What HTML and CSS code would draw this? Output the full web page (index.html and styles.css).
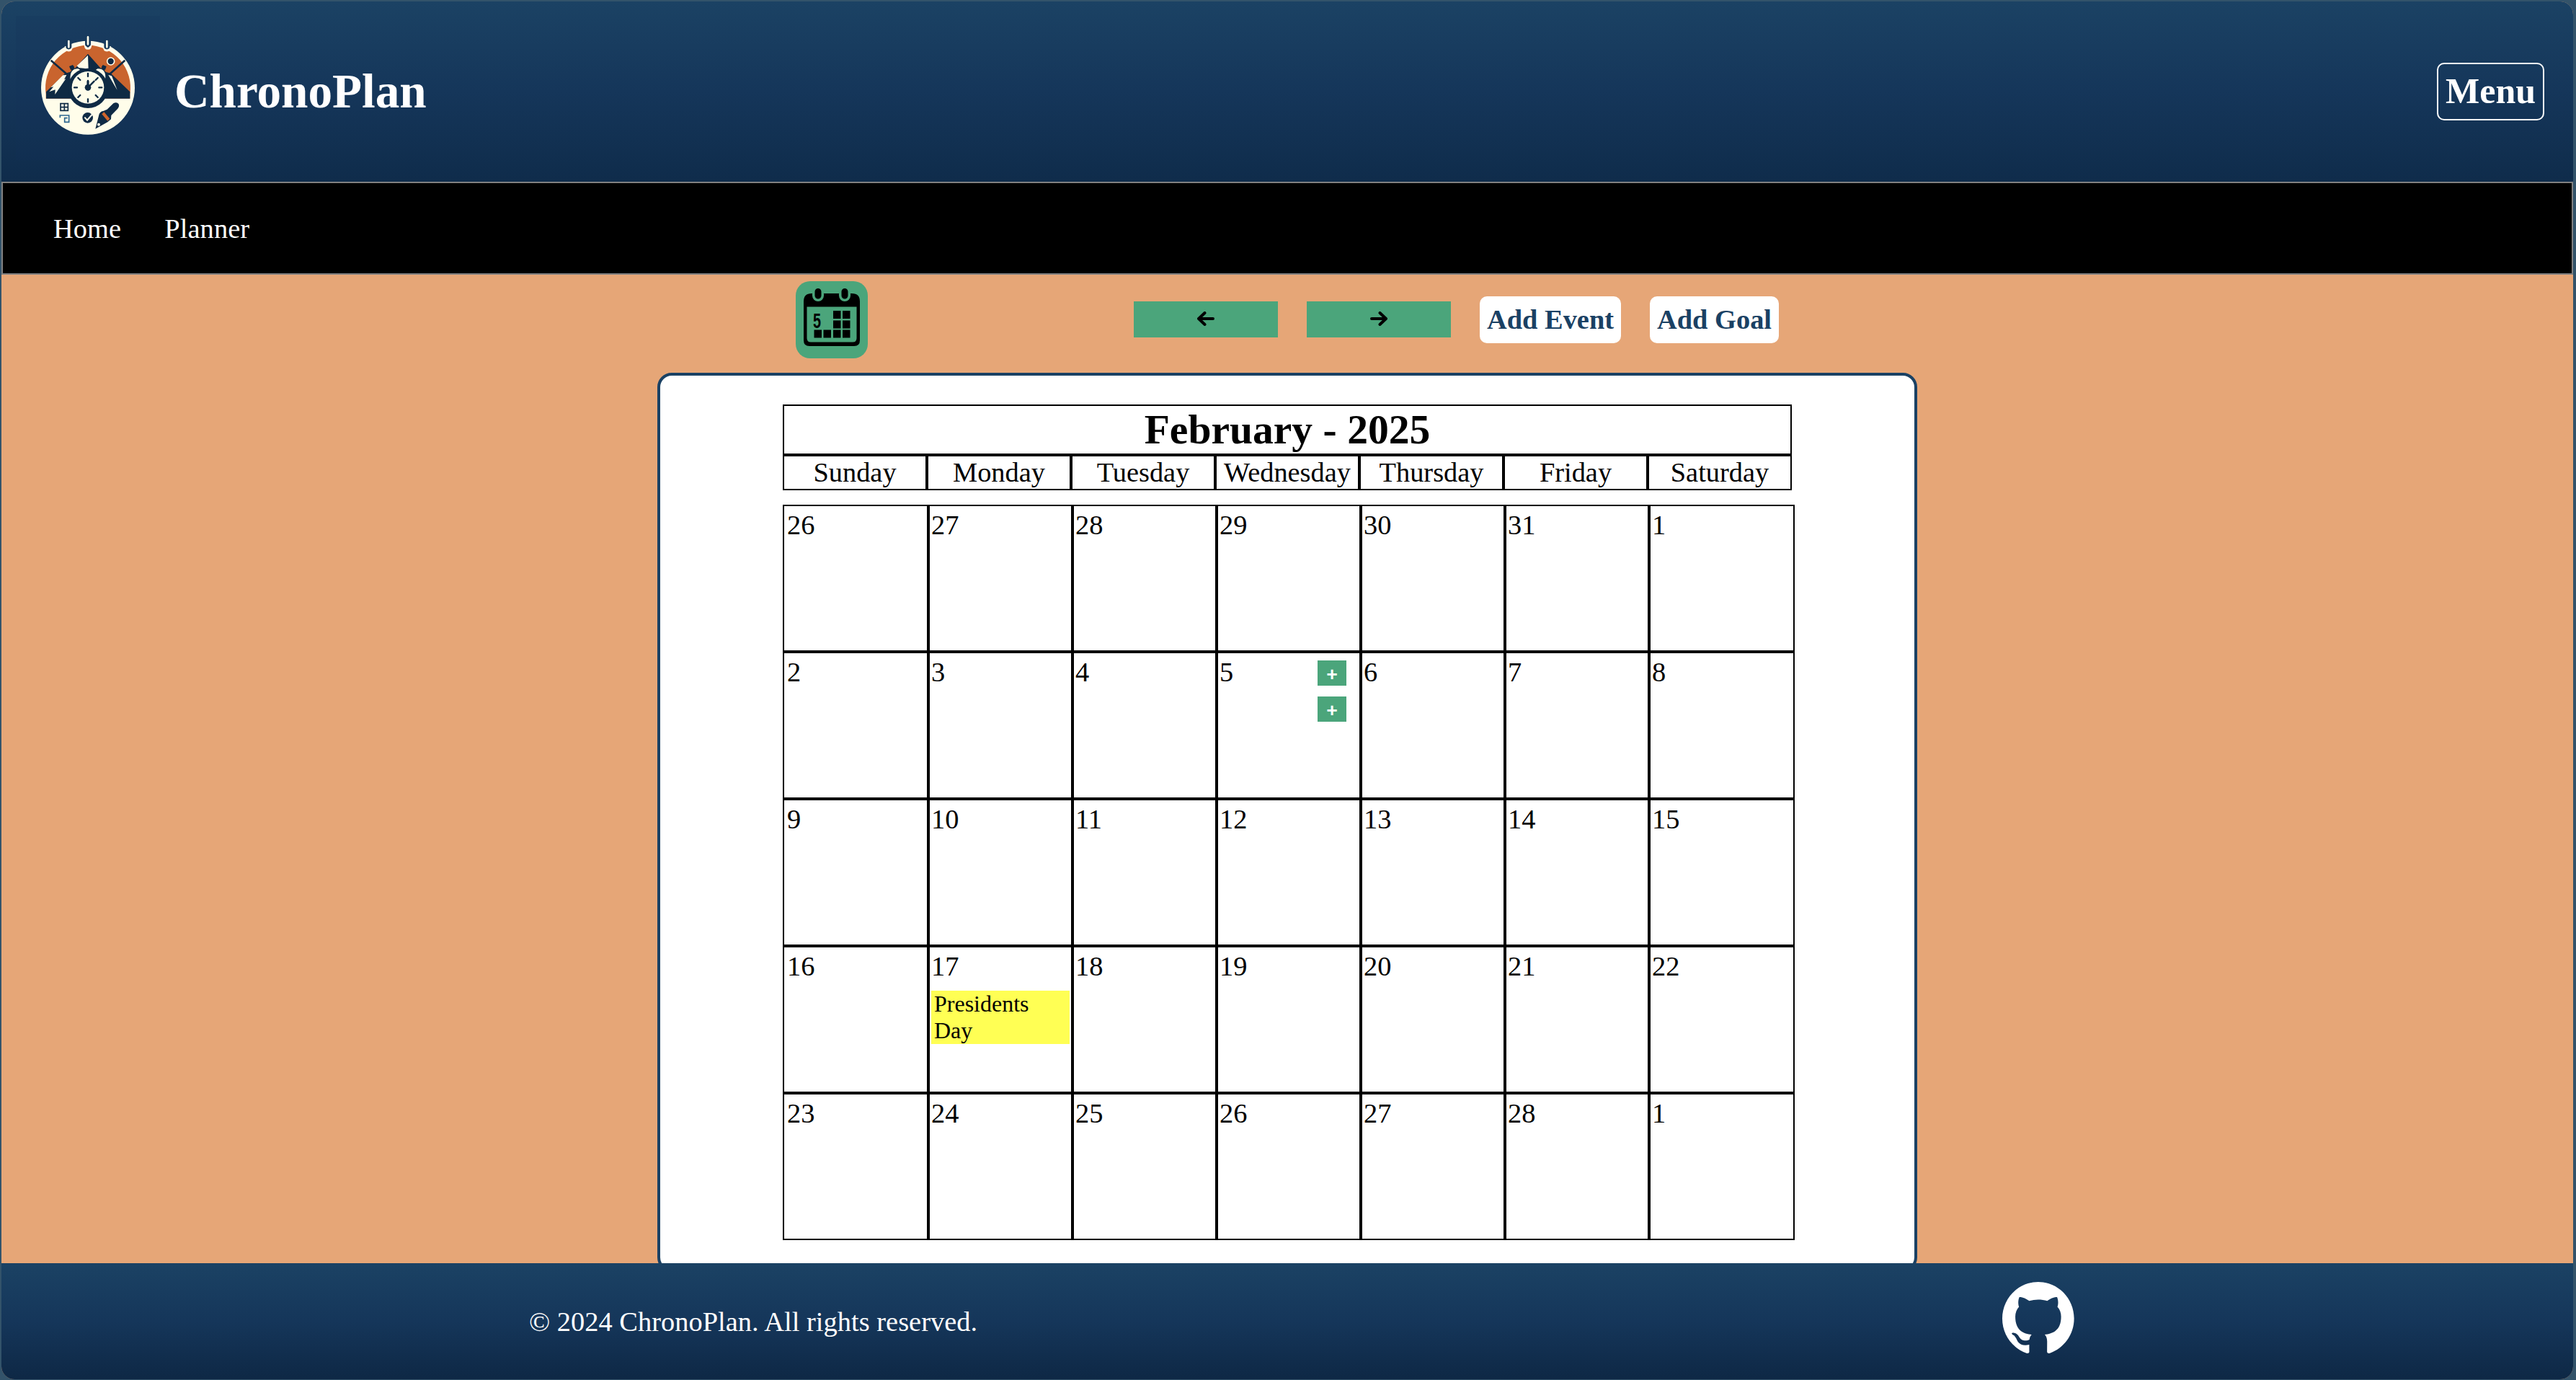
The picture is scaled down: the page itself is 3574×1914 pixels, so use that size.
FILE: index.html
```html
<!DOCTYPE html>
<html lang="en">
<head>
<meta charset="utf-8">
<title>ChronoPlan</title>
<link rel="stylesheet" href="styles.css">
</head>
<body>
<div class="window">
  <header class="header">
    <div class="brand">
      <div class="logo">
        <svg viewBox="0 0 480 480" width="160" height="160" aria-hidden="true">
          <circle cx="246" cy="245" r="195" fill="#fffdea"/>
          <path d="M71 272A177 177 0 1 1 421 272L421 290L71 290Z" fill="#c9642e"/>
          <path d="M154 72Q154 90 166 90Q178 90 178 72M234 62Q234 82 246 82Q258 82 258 62M313 72Q313 90 325 90Q337 90 337 72" fill="#173a5c" stroke="#fffdea" stroke-width="9"/>
          <path d="M154 44h24v30q0 10-12 10t-12-10zM234 28h24v36q0 10-12 10t-12-10zM313 44h24v30q0 10-12 10t-12-10z" fill="#173a5c"/>
          <path d="M166 51V76M246 34V64M325 51V76" stroke="#fffdea" stroke-width="8" stroke-linecap="round"/>
          <path d="M72 290V262L150 186L182 176L246 104L310 176L342 186L421 262V290Z" fill="#0f2a44"/>
          <path d="M92 131L175 203M400 131L320 203" stroke="#0f2a44" stroke-width="8"/>
          <path d="M246 110L248 168Q225 162 209 163L200 154Z" fill="#fffdea"/>
          <path d="M157 192L147 211L154 208L109 273L110 253L85 262L103 241L91 244L142 193ZM331 192L345 196L368 255Z" fill="#fffdea"/>
          <circle cx="341" cy="135" r="15" fill="#0f2a44" stroke="#fffdea" stroke-width="5"/>
          <path d="M168 156L183 150L190 160L185 172L174 170ZM323 156L308 150L302 160L307 172L318 170Z" fill="#0f2a44"/>
          <path d="M171 211Q167 162 207 164L228 178Q193 184 178 211ZM320 211Q326 162 285 164L264 178Q299 184 314 211Z" fill="#fffdea" stroke="#0f2a44" stroke-width="4"/>
          <circle cx="246" cy="247" r="83" fill="#0f2a44"/>
          <circle cx="246" cy="244" r="67" fill="#fffdea"/>
          <path d="M246 186v12M246 292v12M189 244h12M292 244h12M205 204l9 9M278 276l9 9M287 204l-9 9M214 276l-9 9M246 244V216M246 244L272 218" stroke="#0f2a44" stroke-width="7" stroke-linecap="round"/>
          <path d="M246 252V218" stroke="#0f2a44" stroke-width="9" stroke-linecap="round"/>
          <circle cx="246" cy="244" r="13" fill="#0f2a44"/>
          <path d="M132 311h31v29h-31zM148 311v29M132 326h31" fill="none" stroke="#0f2a44" stroke-width="5"/>
          <path d="M130 370V360H167V388H149V371H161" fill="none" stroke="#2c6690" stroke-width="5"/>
          <circle cx="245" cy="370" r="22" fill="#0f2a44"/>
          <path d="M232 368L243 380L268 351" fill="none" stroke="#fffdea" stroke-width="6"/>
          <path d="M277 416L293 354Q300 342 310 342L326 335L352 310Q366 302 374 313Q378 323 370 332L343 360L342 376L328 388Z" fill="#0f2a44"/>
          <path d="M304 355L313 346L337 374L328 383Z" fill="#d0652c"/>
          <circle cx="291" cy="398" r="6" fill="#fffdea"/>
        </svg>
      </div>
      <h1 class="name">ChronoPlan</h1>
    </div>
    <button class="menu" type="button">Menu</button>
  </header>
  <nav class="nav">
    <a class="link">Home</a>
    <a class="link">Planner</a>
  </nav>
  <main class="main">
    <div class="toolbar">
      <div class="calendar-icon">
        <svg viewBox="0 0 100 107" width="100" height="107" aria-hidden="true">
          <path d="M11 38V28Q11 17 22 17H78Q89 17 89 28V38V82Q89 90 81 90H19Q11 90 11 82ZM15.500 35.500V79Q15.500 84.500 21 84.500H79Q84.500 84.500 84.500 79V35.500Z" fill="#000" fill-rule="evenodd"/>
          <path d="M31 18V20M68 18V20" stroke="#4ba57b" stroke-width="16" stroke-linecap="round"/>
          <path d="M31 14.500V20M68 14.500V20" stroke="#000" stroke-width="9" stroke-linecap="round"/>
          <path d="M52 41h10.500v11H52zM65 41h10.500v11H65zM52 54.500h10.500v11H52zM65 54.500h10.500v11H65zM25.500 67.500H36v11H25.500zM38.500 67.500H49v11H38.500zM52 67.500h10.500v11H52zM65 67.500h10.500v11H65z" fill="#000"/>
          <text class="icon-day" x="24" y="65" textLength="11" lengthAdjust="spacingAndGlyphs">5</text>
        </svg>
      </div>
      <div class="actions">
        <button class="arrow" type="button" aria-label="Previous month"><svg viewBox="0 0 24 20" width="24" height="20"><path d="M2 10H22M10.500 2L2 10L10.500 18"/></svg></button>
        <button class="arrow" type="button" aria-label="Next month"><svg viewBox="0 0 24 20" width="24" height="20"><path d="M22 10H2M13.500 2L22 10L13.500 18"/></svg></button>
        <button class="add" type="button">Add Event</button>
        <button class="add" type="button">Add Goal</button>
      </div>
    </div>
    <section class="card">
      <h2 class="month">February - 2025</h2>
      <div class="weekdays">
        <div>Sunday</div><div>Monday</div><div>Tuesday</div><div>Wednesday</div><div>Thursday</div><div>Friday</div><div>Saturday</div>
      </div>
      <div class="days">
        <div class="day first">26</div><div class="day">27</div><div class="day">28</div><div class="day">29</div><div class="day">30</div><div class="day">31</div><div class="day">1</div>
        <div class="day first">2</div><div class="day">3</div><div class="day">4</div>
        <div class="day today"><span>5</span><div class="plus-list"><button class="plus" type="button">+</button><button class="plus" type="button">+</button></div></div>
        <div class="day">6</div><div class="day">7</div><div class="day">8</div>
        <div class="day first">9</div><div class="day">10</div><div class="day">11</div><div class="day">12</div><div class="day">13</div><div class="day">14</div><div class="day">15</div>
        <div class="day first">16</div><div class="day">17<div class="event">Presidents<br>Day</div></div><div class="day">18</div><div class="day">19</div><div class="day">20</div><div class="day">21</div><div class="day">22</div>
        <div class="day first">23</div><div class="day">24</div><div class="day">25</div><div class="day">26</div><div class="day">27</div><div class="day">28</div><div class="day">1</div>
      </div>
    </section>
  </main>
  <footer class="footer">
    <p class="copyright">© 2024 ChronoPlan. All rights reserved.</p>
    <svg class="github" viewBox="0 0 98 96" preserveAspectRatio="none" aria-label="GitHub"><path fill="#fff" fill-rule="evenodd" clip-rule="evenodd" d="M48.854 0C21.839 0 0 22 0 49.217c0 21.756 13.993 40.172 33.405 46.690 2.427.490 3.316-1.059 3.316-2.362 0-1.141-.080-5.052-.080-9.127-13.590 2.934-16.420-5.867-16.420-5.867-2.184-5.704-5.420-7.170-5.420-7.170-4.448-3.015.324-3.015.324-3.015 4.934.326 7.523 5.052 7.523 5.052 4.367 7.496 11.404 5.378 14.235 4.074.404-3.178 1.699-5.378 3.074-6.600-10.839-1.141-22.243-5.378-22.243-24.283 0-5.378 1.940-9.778 5.014-13.200-.485-1.222-2.184-6.275.486-13.038 0 0 4.125-1.304 13.426 5.052a46.970 46.970 0 0 1 12.214-1.630c4.125 0 8.330.571 12.213 1.630 9.302-6.356 13.427-5.052 13.427-5.052 2.670 6.763.970 11.816.485 13.038 3.155 3.422 5.015 7.822 5.015 13.200 0 18.905-11.404 23.060-22.324 24.283 1.780 1.548 3.316 4.481 3.316 9.126 0 6.600-.080 11.897-.080 13.526 0 1.304.890 2.853 3.316 2.364 19.412-6.520 33.405-24.935 33.405-46.691C97.707 22 75.788 0 48.854 0z"/></svg>
  </footer>
</div>
</body>
</html>
```
FILE: styles.css
```css
* {
  box-sizing: border-box;
}

body {
  margin: 0;
  height: 1914px;
  padding: 2px 4px 1px 2px;
  overflow: hidden;
  background: #33536a;
  font-family: "Liberation Serif", "Times New Roman", serif;
  font-size: 38.4px;
  color: #000;
}

button {
  margin: 0;
  border: 0;
  font-family: inherit;
}

h1, h2, p {
  margin: 0;
}

.window {
  display: flex;
  flex-direction: column;
  width: 3568px;
  height: 1911px;
  overflow: hidden;
  border-radius: 18px;
  background: #e6a677;
}

.header {
  display: flex;
  align-items: center;
  justify-content: space-between;
  flex: none;
  height: 250px;
  padding: 0 40px 0 20px;
  background: linear-gradient(#1b4264, #15365a 50%, #0f2c4b);
  color: #fff;
}

.brand {
  display: flex;
  align-items: center;
  gap: 20px;
  height: 250px;
}

.logo {
  align-self: flex-start;
  width: 200px;
  height: 200px;
  padding: 18px;
  margin-top: 20px;
  background: rgba(18, 52, 90, 0.2);
}

.logo svg {
  display: block;
}

.name {
  font-size: 67.2px;
  line-height: 76px;
}

.menu {
  width: 149px;
  height: 80px;
  padding: 0 0 2px;
  border: 2px solid #fff;
  border-radius: 10px;
  background: none;
  color: #fff;
  font-size: 50px;
  font-weight: bold;
  line-height: 74px;
}

.nav {
  display: flex;
  align-items: center;
  gap: 60px;
  flex: none;
  height: 129px;
  padding-left: 70px;
  border: 2px solid #808080;
  background: #000;
}

.link {
  color: #fff;
  line-height: 44px;
  letter-spacing: 0.1px;
}

.main {
  display: flex;
  flex-direction: column;
  align-items: center;
  flex: none;
  height: 1371px;
  overflow: hidden;
}

.toolbar {
  display: flex;
  justify-content: space-between;
  flex: none;
  width: 1364px;
  height: 136px;
  padding-top: 9px;
}

.calendar-icon {
  width: 100px;
  height: 107px;
  border-radius: 20px;
  background: #4ba57b;
}

.calendar-icon svg {
  display: block;
}

.icon-day {
  font: bold 29px "Liberation Sans", Arial, sans-serif;
}

.actions {
  display: flex;
  align-items: center;
  gap: 40px;
  height: 107px;
}

.arrow {
  display: flex;
  align-items: center;
  justify-content: center;
  width: 200px;
  height: 50px;
  margin-bottom: 1px;
  padding: 0 0 2px;
  background: #4ba57b;
}

.arrow path {
  fill: none;
  stroke: #000;
  stroke-width: 4;
  stroke-linecap: round;
  stroke-linejoin: round;
}

.add {
  height: 65px;
  padding: 0 10px;
  border-radius: 10px;
  background: #fff;
  color: #1a4164;
  font-size: 38.4px;
  font-weight: bold;
  line-height: 65px;
}

.card {
  flex: none;
  width: 1748px;
  height: 1247px;
  padding: 40px 170px;
  border: 4px solid #1a4164;
  border-radius: 20px;
  background: #fff;
}

.month {
  width: 1400px;
  height: 70px;
  border: 2px solid #000;
  font-size: 57.6px;
  line-height: 66px;
  text-align: center;
}

.weekdays {
  display: grid;
  grid-template-columns: repeat(7, 200px);
  margin-bottom: 20px;
}

.weekdays > div {
  height: 49px;
  border: 2px solid #000;
  line-height: 45px;
  text-align: center;
}

.days {
  display: grid;
  grid-template-columns: 202px repeat(5, 200px) 202px;
  grid-template-rows: repeat(5, 204px);
  width: 1404px;
}

.day {
  padding-top: 4px;
  border: 2px solid #000;
  line-height: 44px;
  text-indent: 2px;
}

.day.first {
  text-indent: 4px;
}

.today {
  display: flex;
  justify-content: space-between;
  padding-right: 18px;
}

.plus-list {
  display: flex;
  flex-direction: column;
  gap: 15px;
  padding-top: 6px;
  text-indent: 0;
}

.plus {
  width: 40px;
  height: 35px;
  padding: 0;
  background: #4ba57b;
  color: #fff;
  font-family: Inter, sans-serif;
  font-size: 27px;
  font-weight: 600;
  line-height: 32px;
  text-align: center;
}

.event {
  margin: 12px 2px 0;
  padding-left: 4px;
  background: #ffff54;
  font-size: 32px;
  line-height: 37px;
  text-indent: 0;
}

.footer {
  display: flex;
  align-items: center;
  justify-content: space-between;
  flex: none;
  height: 161px;
  padding: 0 692px 0 732px;
  background: linear-gradient(#1b4264, #15365a 50%, #0e2845);
  color: #fff;
}

.copyright {
  line-height: 44px;
  letter-spacing: 0.03px;
}

.github {
  width: 100px;
  height: 99px;
  margin-bottom: 10px;
}
```
